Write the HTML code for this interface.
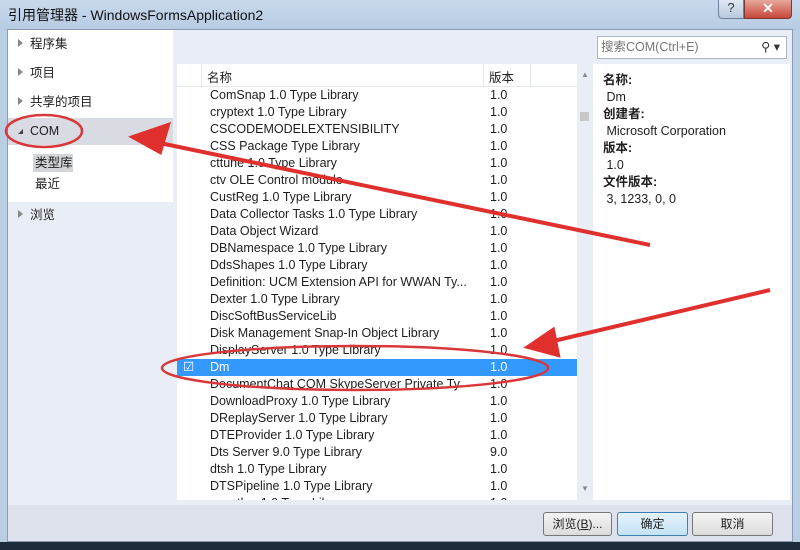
<!DOCTYPE html><html><head><meta charset="utf-8"><style>
*{margin:0;padding:0;box-sizing:border-box}
body{width:800px;height:550px;overflow:hidden;font-family:"Liberation Sans","Noto Sans CJK SC",sans-serif;font-size:12.5px;color:#1e1e1e;background:#b9cde3;position:relative}
.a{position:absolute}
.title{left:0;top:0;width:800px;height:30px;background:linear-gradient(#c8d9ec,#b7cbe2);}
.title span{position:absolute;left:8px;top:5px;font-size:14px;color:#111}
.main{left:7px;top:29px;width:786px;height:513px;background:#e9edf6;border:1px solid #8a9bb3}
.row{position:absolute;height:17px;line-height:17px;white-space:nowrap}
.nav{left:18px;font-size:12.5px}
.tri{display:inline-block;width:0;height:0;border-left:5px solid #888;border-top:4px solid transparent;border-bottom:4px solid transparent;margin-right:7px;vertical-align:1px}
.list{left:177px;top:64px;width:400px;height:436px;background:#fff;overflow:hidden}
.hdr{position:absolute;top:0;height:23px;width:400px;background:#fff;border-bottom:1px solid #e3e6ea}
.btn{position:absolute;top:512px;height:24px;border:1px solid #777;border-radius:3px;background:linear-gradient(#f4f4f4,#dcdcdc);text-align:center;line-height:22px;font-size:12px}
</style></head><body>
<div class="a title"><span>引用管理器 - WindowsFormsApplication2</span></div>
<div class="a" style="left:718px;top:0;width:26px;height:19px;border:1px solid #6d7f99;border-top:none;border-radius:0 0 0 4px;background:linear-gradient(#dfe8f3,#b8c9de);text-align:center;font-size:13px;color:#333">?</div>
<div class="a" style="left:744px;top:0;width:48px;height:19px;border:1px solid #7a3a33;border-top:none;border-radius:0 0 4px 0;background:linear-gradient(#e9a99a,#c7463a);text-align:center;color:#fff;font-size:14px;font-weight:bold">✕</div>
<div class="a main"></div>
<div class="a" style="left:8px;top:30px;width:165px;height:172px;background:#fff"></div>
<div class="a" style="left:8px;top:118px;width:165px;height:27px;background:#d8dbe2"></div>
<div class="a row nav" style="top:36px"><span class="tri"></span>程序集</div>
<div class="a row nav" style="top:65px"><span class="tri"></span>项目</div>
<div class="a row nav" style="top:94px"><span class="tri"></span>共享的项目</div>
<div class="a row nav" style="top:123px"><span class="tri" style="border-left:5px solid transparent;border-bottom:5px solid #444;border-top:0;border-right:0"></span>COM</div>
<div class="a" style="left:33px;top:154px;width:40px;height:18px;background:#d2d4d8"></div>
<div class="a row" style="left:35px;top:155px">类型库</div>
<div class="a row" style="left:35px;top:176px">最近</div>
<div class="a row nav" style="top:207px"><span class="tri"></span>浏览</div>
<div class="a" style="left:597px;top:36px;width:190px;height:23px;background:#fff;border:1px solid #abb5c4;color:#777;line-height:21px;padding-left:3px">搜索COM(Ctrl+E)<span style="position:absolute;right:6px;color:#333">⚲ ▾</span></div>
<div class="a list">
<div class="hdr"><div class="a" style="left:24px;top:0;width:1px;height:23px;background:#e3e6ea"></div><div class="a" style="left:30px;top:3px">名称</div><div class="a" style="left:306px;top:0;width:1px;height:23px;background:#e3e6ea"></div><div class="a" style="left:312px;top:3px">版本</div><div class="a" style="left:353px;top:0;width:1px;height:23px;background:#e3e6ea"></div></div>
<div class="a" style="left:0;top:295px;width:400px;height:17px;background:#3399ff"></div>
<div id="rows"></div>
</div>
<div class="a" style="left:577px;top:64px;width:16px;height:436px;background:#e9edf6"><div class="a" style="left:3px;top:48px;width:9px;height:9px;background:#c8c8c8"></div><div class="a" style="left:4px;top:6px;font-size:8px;color:#888">▲</div><div class="a" style="left:4px;top:420px;font-size:8px;color:#888">▼</div></div>
<div class="a" style="left:593px;top:64px;width:197px;height:436px;background:#fff;line-height:17px;padding:8px 0 0 10px">
<b>名称:</b><br>&nbsp;Dm<br><b>创建者:</b><br>&nbsp;Microsoft Corporation<br><b>版本:</b><br>&nbsp;1.0<br><b>文件版本:</b><br>&nbsp;3, 1233, 0, 0</div>
<div class="a" style="left:8px;top:505px;width:784px;height:36px;background:#dde1ec"></div>
<div class="btn" style="left:543px;width:69px">浏览(<u>B</u>)...</div>
<div class="btn" style="left:617px;width:71px;border-color:#3c7fb1;background:linear-gradient(#e5f3fb,#c4e2f4)">确定</div>
<div class="btn" style="left:692px;width:81px">取消</div>
<div class="a" style="left:0;top:542px;width:800px;height:8px;background:#1d2a3a"></div>
<script>
var d=[["ComSnap 1.0 Type Library","1.0"],["cryptext 1.0 Type Library","1.0"],["CSCODEMODELEXTENSIBILITY","1.0"],["CSS Package Type Library","1.0"],["cttune 1.0 Type Library","1.0"],["ctv OLE Control module","1.0"],["CustReg 1.0 Type Library","1.0"],["Data Collector Tasks 1.0 Type Library","1.0"],["Data Object Wizard","1.0"],["DBNamespace 1.0 Type Library","1.0"],["DdsShapes 1.0 Type Library","1.0"],["Definition: UCM Extension API for WWAN Ty...","1.0"],["Dexter 1.0 Type Library","1.0"],["DiscSoftBusServiceLib","1.0"],["Disk Management Snap-In Object Library","1.0"],["DisplayServer 1.0 Type Library","1.0"],["Dm","1.0"],["DocumentChat COM SkypeServer Private Ty","1.0"],["DownloadProxy 1.0 Type Library","1.0"],["DReplayServer 1.0 Type Library","1.0"],["DTEProvider 1.0 Type Library","1.0"],["Dts Server 9.0 Type Library","9.0"],["dtsh 1.0 Type Library","1.0"],["DTSPipeline 1.0 Type Library","1.0"],["eventlog 1.0 Type Library","1.0"]];
var h="";d.forEach(function(r,i){var t=23+17*i,c=i==16?"color:#fff;":"";h+='<div class="row" style="left:33px;top:'+t+'px;'+c+'">'+r[0]+'</div><div class="row" style="left:313px;top:'+t+'px;'+c+'">'+r[1]+'</div>';});
h+='<div class="row" style="left:6px;top:295px;color:#fff">☑</div>';
document.getElementById("rows").innerHTML=h;
</script>
<svg class="a" style="left:0;top:0" width="800" height="550">
<g fill="none" stroke="#d9383a" stroke-width="2.5">
<ellipse cx="44" cy="131" rx="38" ry="16"/>
<ellipse cx="355" cy="368" rx="193" ry="22"/>
</g>
<g stroke="#e0302e" stroke-width="4" fill="#e0302e">
<line x1="650" y1="245" x2="155" y2="142"/>
<polygon points="133,137 168,125 160,152"/>
<line x1="770" y1="290" x2="545" y2="343"/>
<polygon points="528,347 553,330 558,355"/>
</g>
</svg>
</body></html>
